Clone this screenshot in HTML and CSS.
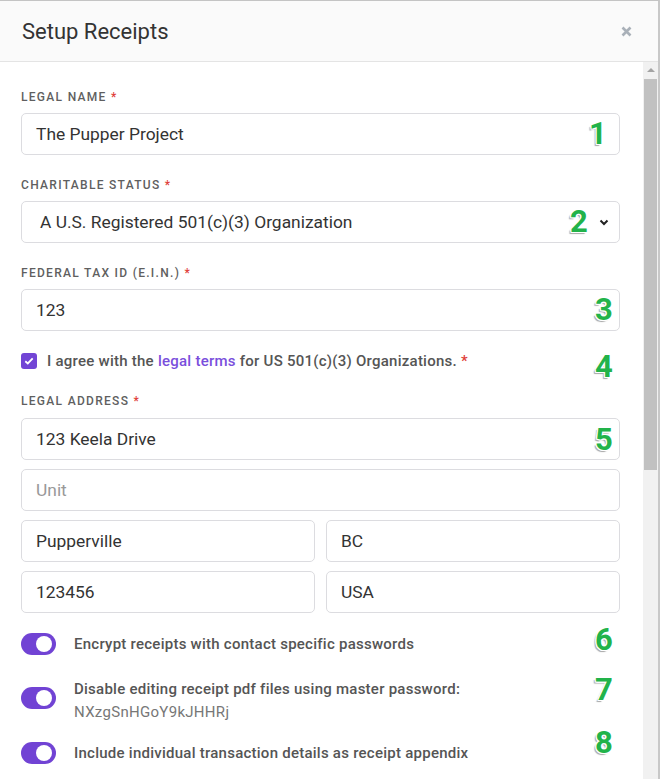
FILE: index.html
```html
<!DOCTYPE html>
<html>
<head>
<meta charset="utf-8">
<link rel="stylesheet" href="styles.css">
</head>
<body>
<div class="modal">
  <div class="header">
    <h1 class="title">Setup Receipts</h1>
    <svg class="close" width="11" height="11" viewBox="0 0 11 11"><path d="M1.5 1.5 L9.5 9.5 M9.5 1.5 L1.5 9.5" stroke="#a9b0b8" stroke-width="2.6" stroke-linecap="butt"/></svg>
  </div>
  <div class="body">
    <div class="content">
      <div class="label">Legal Name <span class="req">*</span></div>
      <div class="field">The Pupper Project</div>

      <div class="label">Charitable Status <span class="req">*</span></div>
      <div class="field select">
        <span>A U.S. Registered 501(c)(3) Organization</span>
        <svg class="chev" width="10" height="7" viewBox="0 0 10 7"><path d="M1.5 1.5 L5 5 L8.5 1.5" fill="none" stroke="#222" stroke-width="2"/></svg>
      </div>

      <div class="label">Federal Tax ID (E.I.N.) <span class="req">*</span></div>
      <div class="field">123</div>

      <div class="agree">
        <span class="checkbox"><svg width="10" height="8" viewBox="0 0 10 8"><path d="M1.3 4.2 L3.8 6.4 L8.7 1.4" fill="none" stroke="#fff" stroke-width="1.8"/></svg></span>
        <span>I agree with the <a class="link">legal terms</a> for US 501(c)(3) Organizations. <span class="req">*</span></span>
      </div>

      <div class="label addr">Legal Address <span class="req">*</span></div>
      <div class="stack">
        <div class="field">123 Keela Drive</div>
        <div class="field placeholder">Unit</div>
        <div class="row">
          <div class="field">Pupperville</div>
          <div class="field">BC</div>
        </div>
        <div class="row">
          <div class="field">123456</div>
          <div class="field">USA</div>
        </div>
      </div>

      <div class="toggles">
        <div class="toggle-row first">
          <span class="toggle"></span>
          <div class="toggle-text">Encrypt receipts with contact specific passwords</div>
        </div>
        <div class="toggle-row second">
          <span class="toggle"></span>
          <div class="toggle-text">Disable editing receipt pdf files using master password:
            <div class="pw">NXzgSnHGoY9kJHHRj</div>
          </div>
        </div>
        <div class="toggle-row">
          <span class="toggle"></span>
          <div class="toggle-text">Include individual transaction details as receipt appendix</div>
        </div>
      </div>

      <span class="num n1">1</span>
      <span class="num n2">2</span>
      <span class="num n3">3</span>
      <span class="num n4">4</span>
      <span class="num n5">5</span>
      <span class="num n6">6</span>
      <span class="num n7">7</span>
      <span class="num n8">8</span>
    </div>
    <div class="scrollbar">
      <div class="arrow"></div>
      <div class="thumb"></div>
    </div>
  </div>
</div>
</body>
</html>
```
FILE: styles.css
```css
* { box-sizing: border-box; }
html, body { margin: 0; padding: 0; background: #fff; }
body { font-family: Roboto, "Liberation Sans", sans-serif; }

.modal {
  width: 660px;
  height: 779px;
  border-top: 1px solid #c4c4c4;
  border-right: 2px solid #c8c8c8;
  overflow: hidden;
  display: flex;
  flex-direction: column;
}

.header {
  height: 61px;
  flex: none;
  background: #fafafa;
  border-bottom: 1px solid #e4e4e4;
  display: flex;
  align-items: center;
  justify-content: space-between;
  padding: 0 26px 0 22px;
}
.title {
  margin: 0;
  font-size: 22px;
  font-weight: 400;
  color: #333;
}
.close { margin-top: 1px; }

.body {
  flex: 1;
  display: flex;
  min-height: 0;
}
.content {
  position: relative;
  flex: 1;
  padding: 27px 23px 0 21px;
}

.label {
  font-size: 12px;
  line-height: 16px;
  font-weight: 500;
  letter-spacing: 1.3px;
  text-transform: uppercase;
  color: #5f5f5f;
  margin-bottom: 8px;
}
.label.addr { margin-bottom: 9px; }
.req { color: #e0403a; }

.field {
  height: 42px;
  border: 1px solid #dcdce0;
  border-radius: 5px;
  padding: 0 14px;
  display: flex;
  align-items: center;
  font-size: 17.4px;
  color: #333;
  margin-bottom: 22px;
}
.field.placeholder { color: #999; }
.select { justify-content: space-between; padding: 0 10px 0 18px; }
.chev { margin-top: 1px; }

.agree {
  display: flex;
  align-items: center;
  gap: 10px;
  font-size: 15px;
  letter-spacing: 0.25px;
  font-weight: 500;
  color: #555;
  margin: 1px 0 24px;
  height: 16px;
}
.checkbox {
  flex: none;
  width: 16px;
  height: 16px;
  border-radius: 3px;
  background: #7245d5;
  display: flex;
  align-items: center;
  justify-content: center;
}
.link { color: #7a4fdc; }

.stack { display: flex; flex-direction: column; gap: 9px; }
.stack .field { margin-bottom: 0; }
.row { display: grid; grid-template-columns: 1fr 1fr; gap: 11px; }

.toggles { margin-top: 20px; display: flex; flex-direction: column; }
.toggle-row { display: flex; align-items: flex-start; gap: 18px; }
.toggle-row.first { margin-bottom: 23px; }
.toggle-row.second { margin-bottom: 18px; }
.toggle-row.second .toggle { margin-top: 9px; }
.toggle {
  flex: none;
  width: 35px;
  height: 22px;
  border-radius: 11px;
  background: #7143d4;
  position: relative;
}
.toggle::after {
  content: "";
  position: absolute;
  right: 4px;
  top: 3px;
  width: 16px;
  height: 16px;
  border-radius: 50%;
  background: #fff;
}
.toggle-text {
  font-size: 15px;
  letter-spacing: 0.25px;
  font-weight: 500;
  color: #555;
  line-height: 22px;
}
.pw {
  font-weight: 400;
  color: #777;
  line-height: 24px;
  letter-spacing: 0.3px;
}

.scrollbar {
  flex: none;
  width: 15px;
  background: #f1f1f1;
  display: flex;
  flex-direction: column;
  align-items: center;
}
.arrow {
  margin-top: 6px;
  width: 0; height: 0;
  border-left: 4px solid transparent;
  border-right: 4px solid transparent;
  border-bottom: 4px solid #a3a3a3;
}
.thumb {
  margin-top: 7px;
  width: 13px;
  height: 391px;
  background: #c1c1c1;
}

.num {
  position: absolute;
  font-family: Roboto, "Liberation Sans", sans-serif;
  font-weight: 700;
  font-size: 31px;
  line-height: 32px;
  color: #22b34a;
  text-shadow: 1px 0 0 #fff, -1px 0 0 #fff, 0 1px 0 #fff, 0 -1px 0 #fff,
    1px 1px 0 #fff, -1px -1px 0 #fff, 1px -1px 0 #fff, -1px 1px 0 #fff,
    -2px 2px 1px rgba(0,0,0,0.35);
}
.n1 { left: 589px; top: 56px; }
.n2 { left: 570px; top: 144px; }
.n3 { left: 595px; top: 232px; }
.n4 { left: 595px; top: 289px; }
.n5 { left: 595px; top: 362px; }
.n6 { left: 595px; top: 562px; }
.n7 { left: 595px; top: 612px; }
.n8 { left: 595px; top: 665px; }
```
